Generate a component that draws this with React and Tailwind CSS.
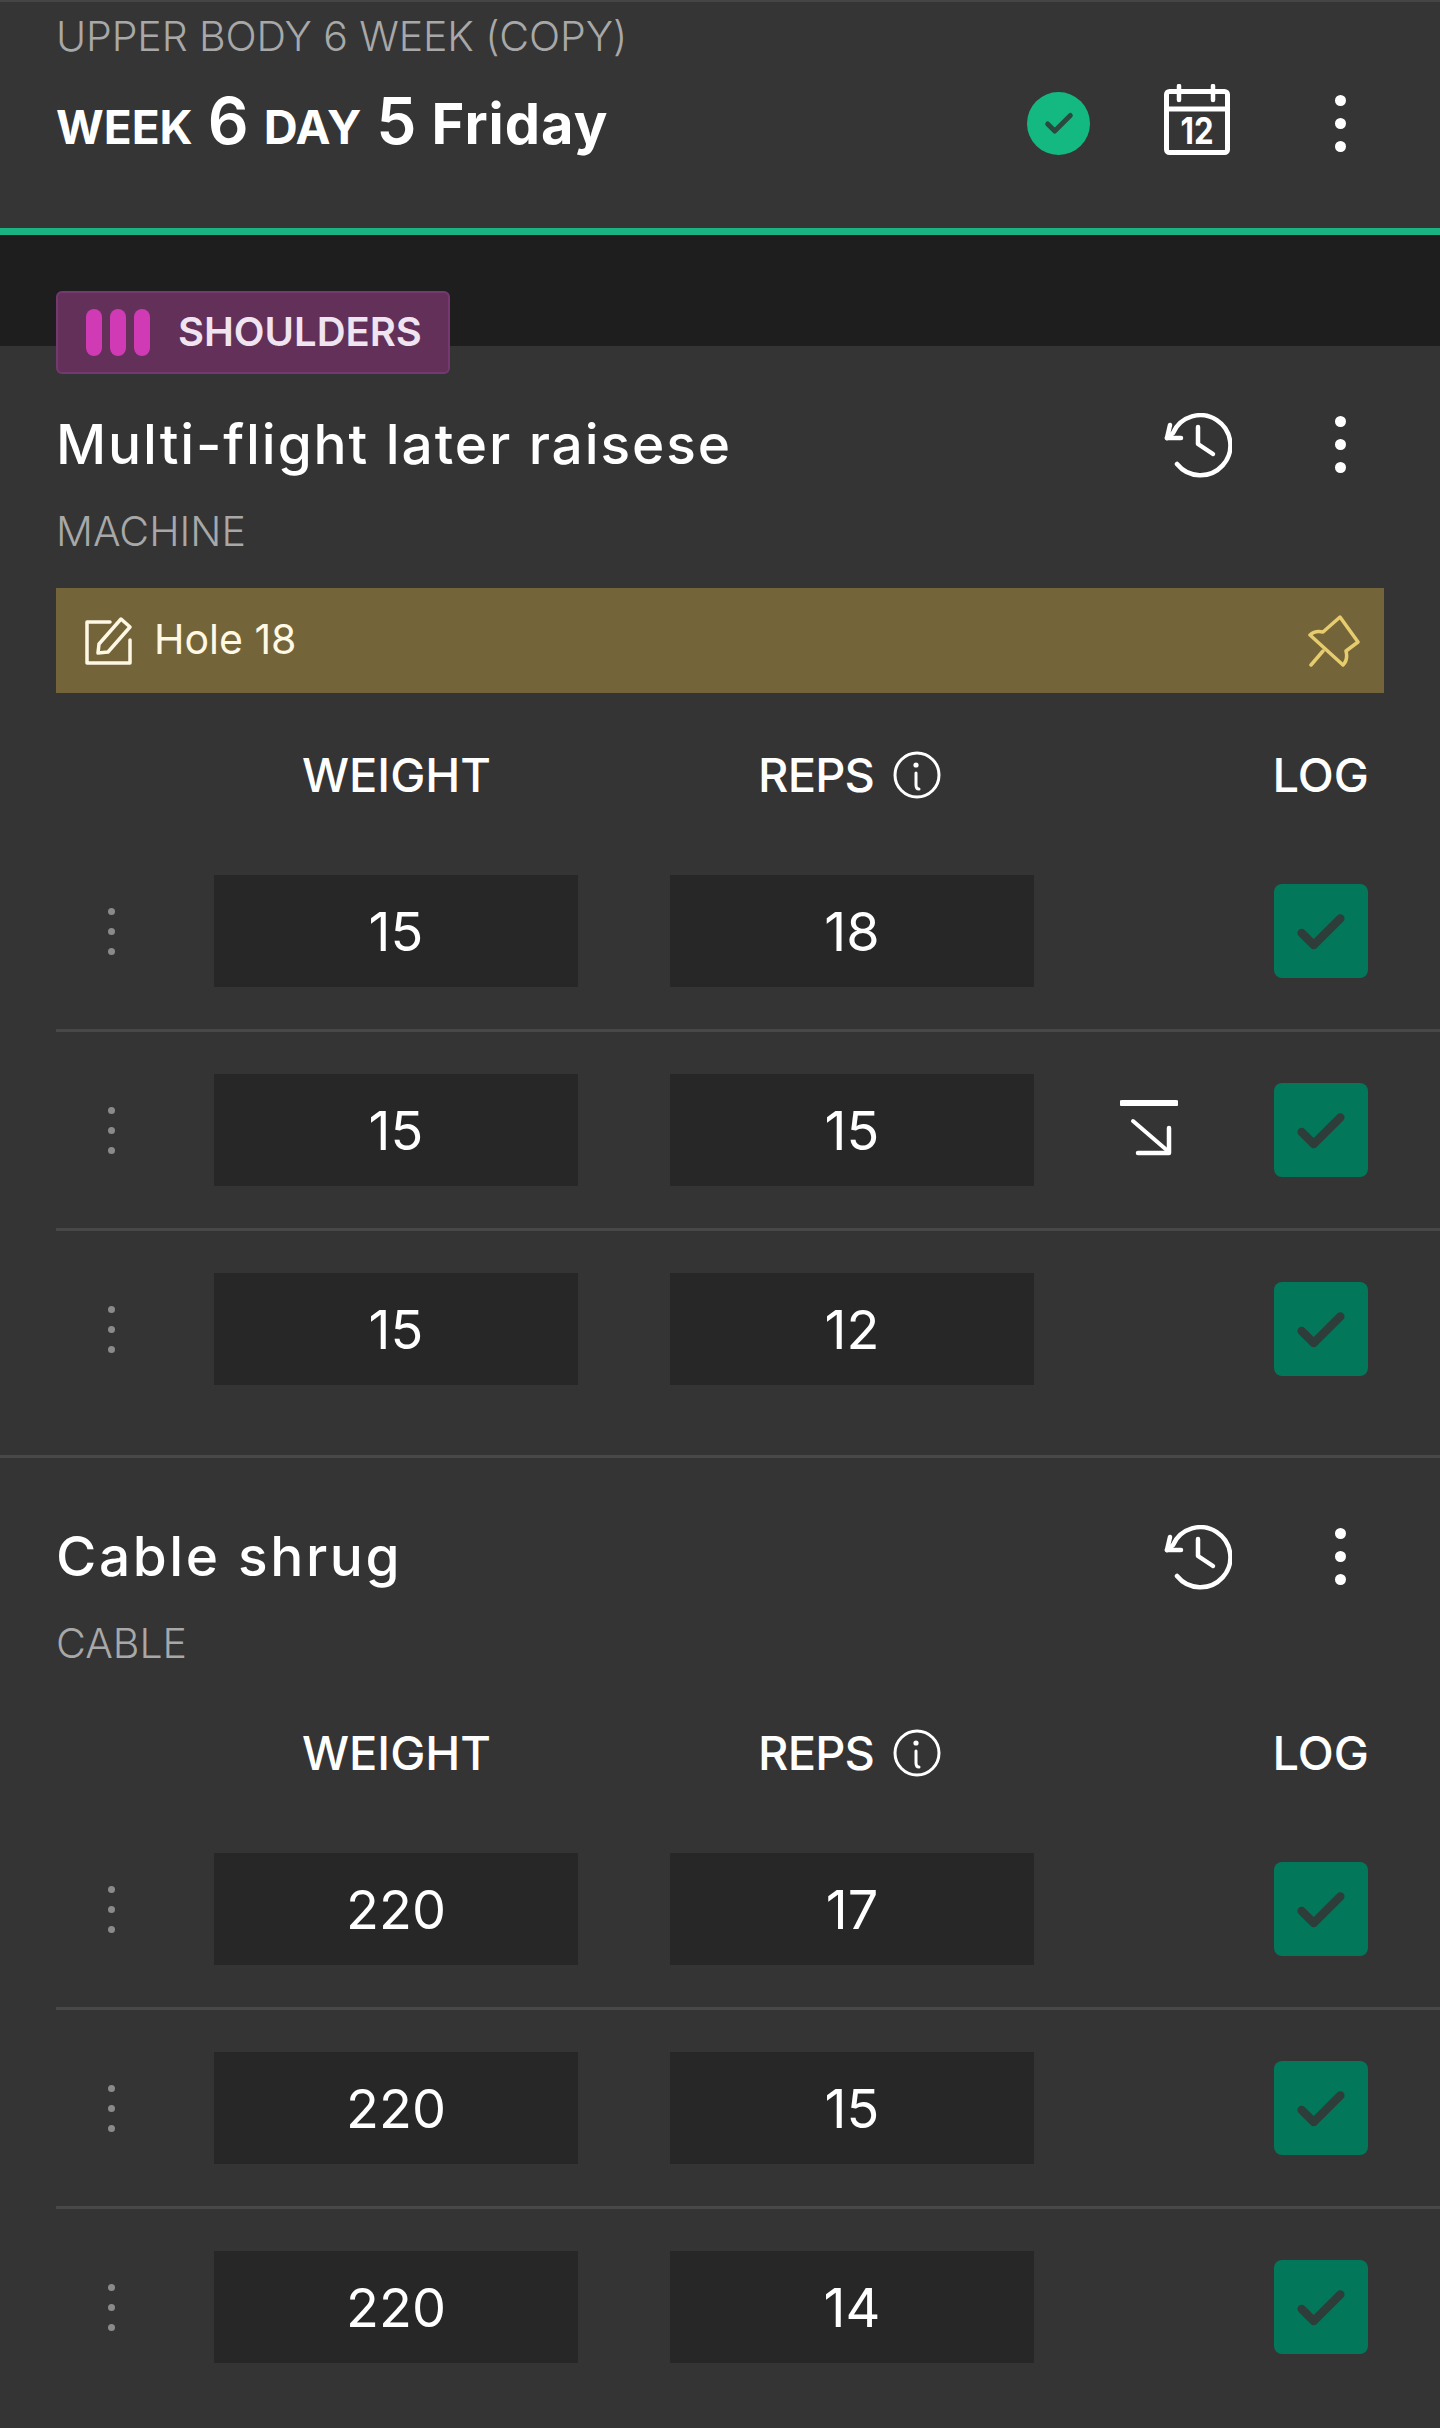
import { Check } from "lucide-react";

const FONT = "font-['Inter','Liberation_Sans',sans-serif]";

function Dots() {
  return (
    <div className="flex w-[11px] flex-col gap-[12px]">
      <span className="h-[11px] w-[11px] rounded-full bg-white" />
      <span className="h-[11px] w-[11px] rounded-full bg-white" />
      <span className="h-[11px] w-[11px] rounded-full bg-white" />
    </div>
  );
}

function Grip() {
  return (
    <div className="flex w-[7px] flex-col gap-[13px]">
      <span className="h-[7px] w-[7px] rounded-full bg-[#8a8a8a]" />
      <span className="h-[7px] w-[7px] rounded-full bg-[#8a8a8a]" />
      <span className="h-[7px] w-[7px] rounded-full bg-[#8a8a8a]" />
    </div>
  );
}

function HistoryIcon() {
  return (
    <svg width="68" height="66" viewBox="0 0 68 66" fill="none" stroke="white" strokeWidth="4.5" strokeLinecap="round" strokeLinejoin="round">
      <path d="M13 51A30 30 0 1 0 9 20L3 25" />
      <path d="M6 12L3 25h14" />
      <path d="M34 14v17l15 10" />
    </svg>
  );
}

function CalendarIcon() {
  return (
    <svg width="66" height="72" viewBox="0 0 66 72" fill="none">
      <rect x="2.5" y="7.5" width="61" height="61" rx="3" stroke="white" strokeWidth="5" />
      <path d="M2 25h62" stroke="white" strokeWidth="5" />
      <path d="M15 2v14M49 2v14" stroke="white" strokeWidth="4.5" strokeLinecap="round" />
      <text x="33" y="60" textAnchor="middle" textLength="33" lengthAdjust="spacingAndGlyphs" fill="white" fontSize="37" fontWeight="700" fontFamily="Inter, sans-serif">12</text>
    </svg>
  );
}

function InfoIcon() {
  return (
    <svg width="48" height="48" viewBox="0 0 48 48" fill="none" stroke="white" strokeWidth="3" strokeLinecap="round">
      <circle cx="24" cy="24" r="22" />
      <circle cx="23" cy="14" r="2.6" fill="white" stroke="none" />
      <path d="M23 22v12c0 3 1 4 3 4" />
    </svg>
  );
}

function DropIcon() {
  return (
    <svg width="58" height="56" viewBox="0 0 58 56" fill="none" stroke="white" strokeLinecap="round" strokeLinejoin="round">
      <path d="M2 3h54" strokeWidth="6" />
      <path d="M13 21l36 31" strokeWidth="4" />
      <path d="M49 28v25H18" strokeWidth="4.5" />
    </svg>
  );
}

function Row({ weight, reps, drop, last }) {
  return (
    <div className={`ml-[56px] flex h-[199px] items-center border-b-[3px] ${last ? "border-transparent" : "border-[#484848]"}`}>
      <div className="flex w-[158px] pl-[52px]"><Grip /></div>
      <div className="flex h-[112px] w-[364px] items-center justify-center bg-[#272727] text-[54px] text-white">{weight}</div>
      <div className="ml-[92px] flex h-[112px] w-[364px] items-center justify-center bg-[#272727] text-[54px] text-white">{reps}</div>
      <div className="flex w-[240px] items-center justify-center pr-[10px] pb-[4px]">{drop && <DropIcon />}</div>
      <div className="flex h-[94px] w-[94px] items-center justify-center rounded-[8px] bg-[#03775a] pt-[3px]">
        <Check size={58} strokeWidth={3.5} className="text-[#2f3d3a]" />
      </div>
    </div>
  );
}

function Exercise({ title, titleClass, kind, note, rows }) {
  return (
    <section>
      <div className="flex items-center justify-between pl-[56px] pr-[94px]">
        <h2 className={`text-[55px] font-medium leading-[72px] text-white ${titleClass}`}>{title}</h2>
        <div className="flex items-center gap-[103px]">
          <div className="pt-[3px]"><HistoryIcon /></div>
          <Dots />
        </div>
      </div>
      <p className="mt-[25px] pl-[56px] text-[41px] font-light leading-[52px] text-[#a8a8a8]">{kind}</p>
      {note && (
        <div className="mx-[56px] mt-[31px] flex h-[105px] items-center justify-between bg-[#736539] pl-[28px] pr-[24px]">
          <div className="flex items-center gap-[20px]">
            <svg width="50" height="50" viewBox="0 0 50 50" fill="none" stroke="#fff8e5" strokeWidth="3.5" strokeLinecap="round" strokeLinejoin="round">
              <path d="M26 6H3v41h43V24" />
              <path d="M15 28L37 3l9 8-22 25-10 1z" />
            </svg>
            <span className="pb-[2px] text-[41px] text-[#fff8e5]">{note}</span>
          </div>
          <svg width="52" height="52" viewBox="0 0 52 52" fill="none" stroke="#e6cc6e" strokeWidth="3.5" strokeLinecap="round" strokeLinejoin="round">
            <path d="M32 2l18 25-12 9c1 4 1 10-3 14L2 20c3-3 8-4 13-3z" />
            <path d="M15 36L3 50" />
          </svg>
        </div>
      )}
      <div className={`flex h-[64px] items-center pl-[56px] text-[47px] font-medium text-white ${note ? "mt-[50px]" : "mt-[52px]"}`}>
        <div className="flex w-[435px] justify-end">WEIGHT</div>
        <div className="ml-[267px] flex items-center gap-[19px]">
          <span className="tracking-[-0.8px]">REPS</span> <InfoIcon />
        </div>
        <div className="ml-auto pr-[71px]">LOG</div>
      </div>
      <div className="mt-[26px]">
        {rows.map((row, index) => (
          <Row key={index} weight={row[0]} reps={row[1]} drop={row[2]} last={index === rows.length - 1} />
        ))}
      </div>
    </section>
  );
}

export default function App() {
  return (
    <div className={`min-h-[2428px] bg-[#343434] ${FONT}`}>
      <header className="h-[235px] border-t-2 border-b-[7px] border-t-[#454545] border-b-[#19b482] bg-[#353535] pl-[56px] pr-[94px]">
        <p className="pt-[8px] text-[41px] font-light leading-[52px] tracking-[-0.1px] text-[#a8a8a8]">UPPER BODY 6 WEEK (COPY)</p>
        <div className="mt-[22px] flex items-center justify-between">
          <div className="flex items-baseline gap-[15px] font-bold leading-[70px] text-white">
            <span className="text-[46px]">WEEK</span>
            <span className="text-[64px] font-semibold">6</span>
            <span className="text-[47px]">DAY</span>
            <span className="text-[64px] font-semibold">5</span>
            <span className="text-[56px] tracking-[1px]">Friday</span>
          </div>
          <div className="flex items-center">
            <div className="flex h-[63px] w-[63px] items-center justify-center rounded-full bg-[#14b982]">
              <Check size={34} strokeWidth={3.5} className="text-[#2a4a40]" />
            </div>
            <div className="mb-[7px] ml-[74px]"><CalendarIcon /></div>
            <div className="ml-[105px]"><Dots /></div>
          </div>
        </div>
      </header>
      <div className="h-[111px] bg-[#1e1e1e]" />
      <div className="-mt-[55px] pb-[25px]">
        <div className="ml-[56px] flex h-[83px] w-[394px] items-center gap-[28px] rounded-[6px] border-2 border-[#75386f] bg-[#623059] pl-[28px]">
          <div className="flex gap-[8px]">
            <span className="h-[47px] w-[16px] rounded-full bg-[#d03ab5]" />
            <span className="h-[47px] w-[16px] rounded-full bg-[#d03ab5]" />
            <span className="h-[47px] w-[16px] rounded-full bg-[#d03ab5]" />
          </div>
          <span className="-mt-[2px] text-[40px] font-semibold text-[#efe4ef]">SHOULDERS</span>
        </div>
        <div className="mt-[34px]">
          <Exercise title="Multi-flight later raisese" titleClass="tracking-[1.9px]" kind="MACHINE" note="Hole 18" rows={[["15", "18"], ["15", "15", true], ["15", "12"]]} />
        </div>
      </div>
      <div className="border-t-[3px] border-[#484848] pt-[62px]">
        <Exercise title="Cable shrug" titleClass="tracking-[2.6px]" kind="CABLE" rows={[["220", "17"], ["220", "15"], ["220", "14"]]} />
      </div>
    </div>
  );
}
